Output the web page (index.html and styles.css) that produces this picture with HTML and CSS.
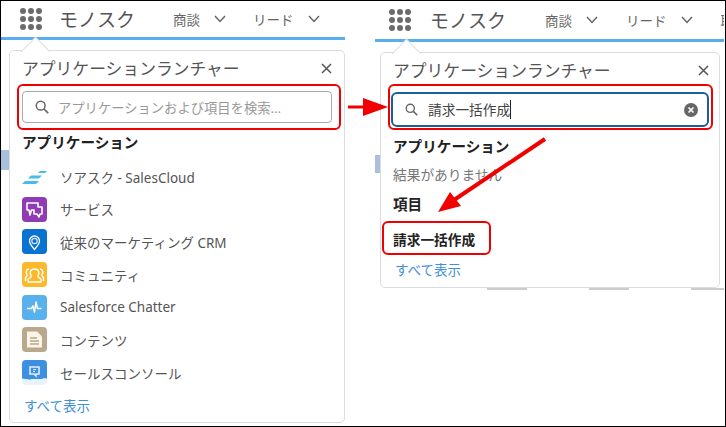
FILE: index.html
```html
<!DOCTYPE html>
<html>
<head>
    <title>アプリケーションランチャー</title>
    <link rel="stylesheet" href="styles.css">
</head>
<body>
    <div class="sheet">
        <!-- before -->
        <div class="shot shot-before">
            <div class="top-bar">
                <svg class="waffle" width="22" height="22" viewBox="0 0 22 22"><g fill="#6b6b6b"><circle cx="3" cy="3" r="3"/><circle cx="11" cy="3" r="3"/><circle cx="19" cy="3" r="3"/><circle cx="3" cy="11" r="3"/><circle cx="11" cy="11" r="3"/><circle cx="19" cy="11" r="3"/><circle cx="3" cy="19" r="3"/><circle cx="11" cy="19" r="3"/><circle cx="19" cy="19" r="3"/></g></svg>
                <span class="app-name">モノスク</span>
                <span class="nav-item nav-first">商談</span>
                <svg class="chevron" width="12" height="8" viewBox="0 0 12 8"><path d="M1 1l5 5.5L11 1" fill="none" stroke="#666" stroke-width="1.5"/></svg>
                <span class="nav-item nav-next">リード</span>
                <svg class="chevron" width="12" height="8" viewBox="0 0 12 8"><path d="M1 1l5 5.5L11 1" fill="none" stroke="#666" stroke-width="1.5"/></svg>
            </div>
            <div class="sliver"></div>
            <div class="launcher">
                <div class="notch"></div>
                <div class="launcher-head">
                    <span class="launcher-title">アプリケーションランチャー</span>
                    <svg class="close-icon" width="11" height="11" viewBox="0 0 11 11"><path d="M1 1l9 9M10 1l-9 9" stroke="#555" stroke-width="1.5"/></svg>
                </div>
                <div class="mark mark-search">
                    <div class="search-box">
                        <svg class="search-icon" width="14" height="14" viewBox="0 0 14 14"><circle cx="5.7" cy="5.7" r="4.4" fill="none" stroke="#666" stroke-width="1.5"/><path d="M9 9l4.2 4.2" stroke="#666" stroke-width="1.7"/></svg>
                        <span class="placeholder">アプリケーションおよび項目を検索...</span>
                    </div>
                </div>
                <div class="section-title">アプリケーション</div>
                <div class="app-list">
                    <div class="app-row">
                        <svg class="app-icon" width="25" height="25" viewBox="0 0 25 25"><g fill="#45bdea"><path d="M0 20l3-3h14l-3 3z"/><path d="M6 14.5l3-3h11l-3 3z"/><path d="M16 9l2-2h7l-2 2z"/></g></svg>
                        <span>ソアスク - SalesCloud</span>
                    </div>
                    <div class="app-row">
                        <svg class="app-icon" width="25" height="25" viewBox="0 0 25 25"><rect width="25" height="25" rx="4" fill="#8e3bb5"/><path d="M5 6h11v4h4v7h-2l-1 3-2-3h-3v-4H9.500L8 18l-1-5H5z" fill="none" stroke="#fff" stroke-width="1.6" stroke-linejoin="round"/></svg>
                        <span>サービス</span>
                    </div>
                    <div class="app-row">
                        <svg class="app-icon" width="25" height="25" viewBox="0 0 25 25"><rect width="25" height="25" rx="4" fill="#0a72d0"/><path d="M12.5 20.5c-3-3.500-5-6-5-8.500a5 5 0 0 1 10 0c0 2.500-2 5-5 8.500z" fill="none" stroke="#fff" stroke-width="1.3"/><circle cx="12.5" cy="12" r="2.7" fill="none" stroke="#d5e6f7" stroke-width="1.2"/></svg>
                        <span>従来のマーケティング CRM</span>
                    </div>
                    <div class="app-row">
                        <svg class="app-icon" width="25" height="25" viewBox="0 0 25 25"><rect width="25" height="25" rx="4" fill="#fcb92b"/><g fill="none" stroke="#fff" stroke-width="1.4"><path d="M9 13c-1.500-1-1.500-6 3.500-6s5 5 3.500 6v2l3 2v3H6v-3l3-2z"/><path d="M7 7c-3 0-3.500 4-2 5.500V14l-1.500 1.500V19"/><path d="M18 7c3 0 3.500 4 2 5.500V14l1.500 1.500V19"/></g></svg>
                        <span>コミュニティ</span>
                    </div>
                    <div class="app-row">
                        <svg class="app-icon" width="25" height="25" viewBox="0 0 25 25"><rect width="25" height="25" rx="4" fill="#58b1ec"/><path d="M5 13.500h4.500l1.500-2.500 1.500 6 1.500-10 1.500 6.500h4" fill="none" stroke="#fff" stroke-width="1.5" stroke-linejoin="round"/></svg>
                        <span>Salesforce Chatter</span>
                    </div>
                    <div class="app-row">
                        <svg class="app-icon" width="25" height="25" viewBox="0 0 25 25"><rect width="25" height="25" rx="4" fill="#b9a88c"/><path d="M5 4.500h10l5 5v11H5z" fill="#fbf5e8"/><path d="M8 11h7M8 14h9M8 17h9" stroke="#b9a88c" stroke-width="1.5"/></svg>
                        <span>コンテンツ</span>
                    </div>
                    <div class="app-row">
                        <svg class="app-icon" width="25" height="25" viewBox="0 0 25 25"><path d="M0 4a4 4 0 0 1 4-4h17a4 4 0 0 1 4 4v15c-3-1.500-5 1-8 0-3 1-5-1-8 .5-3 1-6-1.500-9-.5z" fill="#3d8fe0"/><path d="M0 19c3-1 6 1.500 9 .5 3-1.500 5 .5 8-.5 3 1 5-1.500 8 0v2a4 4 0 0 1-4 4H4a4 4 0 0 1-4-4z" fill="#e8f3fb"/><path d="M8 7h9v7h-3v2l-2-2H8z" fill="none" stroke="#e4f1fb" stroke-width="1.5"/><path d="M11 9.500h3M11 11.500h2" stroke="#e4f1fb"/></svg>
                        <span>セールスコンソール</span>
                    </div>
                </div>
                <a class="show-all">すべて表示</a>
            </div>
        </div>

        <!-- after -->
        <div class="shot shot-after">
            <div class="top-bar">
                <svg class="waffle" width="22" height="22" viewBox="0 0 22 22"><g fill="#6b6b6b"><circle cx="3" cy="3" r="3"/><circle cx="11" cy="3" r="3"/><circle cx="19" cy="3" r="3"/><circle cx="3" cy="11" r="3"/><circle cx="11" cy="11" r="3"/><circle cx="19" cy="11" r="3"/><circle cx="3" cy="19" r="3"/><circle cx="11" cy="19" r="3"/><circle cx="19" cy="19" r="3"/></g></svg>
                <span class="app-name">モノスク</span>
                <span class="nav-item nav-first">商談</span>
                <svg class="chevron" width="12" height="8" viewBox="0 0 12 8"><path d="M1 1l5 5.5L11 1" fill="none" stroke="#666" stroke-width="1.5"/></svg>
                <span class="nav-item nav-next">リード</span>
                <svg class="chevron" width="12" height="8" viewBox="0 0 12 8"><path d="M1 1l5 5.5L11 1" fill="none" stroke="#666" stroke-width="1.5"/></svg>
                <span class="nav-item nav-cut">取引</span>
            </div>
            <div class="sliver"></div>
            <div class="behind-text"><i></i><i></i><i></i><i></i></div>
            <div class="launcher">
                <div class="notch"></div>
                <div class="launcher-head">
                    <span class="launcher-title">アプリケーションランチャー</span>
                    <svg class="close-icon" width="11" height="11" viewBox="0 0 11 11"><path d="M1 1l9 9M10 1l-9 9" stroke="#555" stroke-width="1.5"/></svg>
                </div>
                <div class="mark mark-search">
                    <div class="search-box search-focus">
                        <svg class="search-icon" width="13" height="13" viewBox="0 0 14 14"><circle cx="5.7" cy="5.7" r="4.4" fill="none" stroke="#666" stroke-width="1.5"/><path d="M9 9l4.2 4.2" stroke="#666" stroke-width="1.7"/></svg>
                        <span class="typed">請求一括作成</span>
                        <svg class="clear-icon" width="14" height="14" viewBox="0 0 14 14"><circle cx="7" cy="7" r="7" fill="#666"/><path d="M4.500 4.500l5 5M9.500 4.500l-5 5" stroke="#fff" stroke-width="1.7"/></svg>
                    </div>
                </div>
                <div class="section-title">アプリケーション</div>
                <div class="no-result">結果がありません</div>
                <div class="section-title section-items">項目</div>
                <div class="mark mark-item">請求一括作成</div>
                <a class="show-all">すべて表示</a>
            </div>
        </div>

        <!-- arrows -->
        <svg class="arrows" width="726" height="427" viewBox="0 0 726 427">
            <path d="M348 107h17" stroke="#f00000" stroke-width="3"/>
            <path d="M388 107l-25-9v18z" fill="#f00000"/>
            <path d="M545 139l-91 61" stroke="#f00000" stroke-width="4"/>
            <path d="M438 212l12-20 11 14z" fill="#f00000"/>
        </svg>
    </div>
</body>
</html>
```

FILE: styles.css
```css
body {
    margin: 0;
    background-color: #fff;
    font-family: "Noto Sans", "Noto Sans CJK JP", sans-serif;
    color: #555;
}

.sheet {
    position: relative;
    display: flex;
    gap: 30px;
    width: 726px;
    height: 427px;
    box-sizing: border-box;
    border: 1px solid #000;
    overflow: hidden;
}

.shot {
    position: relative;
    flex: none;
    overflow: hidden;
}

.shot-before {
    width: 344px;
}

.shot-after {
    width: 349px;
}

/* top bar */
.top-bar {
    display: flex;
    align-items: center;
    border-bottom: 3px solid #5aaef0;
    white-space: nowrap;
}

.shot-before .top-bar {
    height: 36px;
    padding-left: 19px;
}

.shot-after .top-bar {
    height: 38px;
    padding-left: 14px;
}

.waffle,
.chevron {
    flex: none;
}

.app-name {
    margin-left: 17px;
    font-size: 19px;
}

.shot-after .app-name {
    margin-left: 19px;
}

.nav-item {
    font-size: 13.5px;
    color: #666;
}

.nav-first {
    margin-left: 38px;
}

.shot-after .nav-first {
    margin-left: 39px;
}

.nav-next {
    margin-left: 27px;
}

.shot-after .nav-next {
    margin-left: 28px;
}

.chevron {
    margin-left: 14px;
}

.nav-cut {
    margin-left: 28px;
}

/* bits of the page behind the launcher */
.sliver {
    position: absolute;
    background-color: #a8c0dc;
}

.shot-before .sliver {
    left: 0;
    top: 149px;
    width: 8px;
    height: 20px;
}

.shot-after .sliver {
    left: 0;
    top: 154px;
    width: 5px;
    height: 18px;
}

.behind-text {
    position: absolute;
    left: 112px;
    top: 287px;
    display: flex;
    gap: 62px;
}

.behind-text i {
    width: 40px;
    height: 2px;
    background-color: #ccc;
}

/* launcher panel */
.launcher {
    position: relative;
    box-sizing: border-box;
    background-color: #fff;
    border: 1px solid #dcdcdc;
    border-radius: 5px;
    padding: 5px 12px 6px;
}

.shot-before .launcher {
    width: 336px;
    height: 373px;
    margin: 10px 0 0 8px;
}

.shot-after .launcher {
    width: 340px;
    height: 236px;
    margin: 10px 0 0 5px;
}

.notch {
    position: absolute;
    top: -10px;
    left: 15px;
    width: 20px;
    height: 20px;
    background-color: #fff;
    border-top: 1px solid #dcdcdc;
    border-left: 1px solid #dcdcdc;
    transform: rotate(45deg);
}

.launcher-head {
    position: relative;
    display: flex;
    align-items: center;
    justify-content: space-between;
    height: 24px;
}

.launcher-title {
    font-size: 16.8px;
    white-space: nowrap;
}

.shot-after .close-icon {
    margin-right: -2px;
}

/* red marks */
.mark {
    box-sizing: border-box;
    border: 2px solid #f00000;
    border-radius: 6px;
}

.mark-search {
    height: 46px;
}

.shot-before .mark-search {
    margin: 4px -9px 0 -5px;
    padding: 5px 7px 5px 3px;
}

.shot-after .mark-search {
    margin: 2px -6px 0 -5px;
    padding: 6px 2px 1px 1px;
}

.mark-item {
    width: 109px;
    height: 34px;
    margin: 6px 0 0 -11px;
    padding: 7px 0 0 9px;
    font-size: 13.7px;
    font-weight: bold;
    line-height: 20px;
    color: #222;
    white-space: nowrap;
}

/* search */
.search-box {
    display: flex;
    align-items: center;
    box-sizing: border-box;
    height: 32px;
    border: 1px solid #aaa;
    border-radius: 4px;
    padding-left: 12px;
}

.search-focus {
    height: 35px;
    border: 2.5px solid #1b5e98;
    border-radius: 6px;
    padding: 0 9px 0 12px;
}

.placeholder {
    margin-left: 9px;
    font-size: 13.3px;
    color: #999;
    white-space: nowrap;
}

.typed {
    margin-left: 10px;
    font-size: 13.7px;
    line-height: 19px;
    color: #444;
    border-right: 1px solid #222;
}

.clear-icon {
    margin-left: auto;
}

/* lists */
.section-title {
    font-size: 14.6px;
    font-weight: bold;
    line-height: 22px;
    color: #222;
}

.shot-before .section-title {
    margin-top: 1px;
}

.shot-after .section-title {
    margin-top: 5px;
}

.shot-after .section-items {
    margin-top: 8px;
}

.app-list {
    margin-top: 7.2px;
}

.app-row {
    display: flex;
    align-items: center;
    gap: 13px;
    height: 32.7px;
    font-size: 13.5px;
    white-space: nowrap;
}

.app-icon {
    flex: none;
}

.no-result {
    margin-top: 8px;
    font-size: 13.7px;
    line-height: 20px;
    color: #777;
}

.show-all {
    display: block;
    margin-left: 2px;
    font-size: 13.5px;
    line-height: 20px;
    color: #3d8fdc;
}

.shot-before .show-all {
    margin-top: 6.5px;
}

.shot-after .show-all {
    margin-top: 5px;
}

.arrows {
    position: absolute;
    left: -1px;
    top: -1px;
    pointer-events: none;
}
```
